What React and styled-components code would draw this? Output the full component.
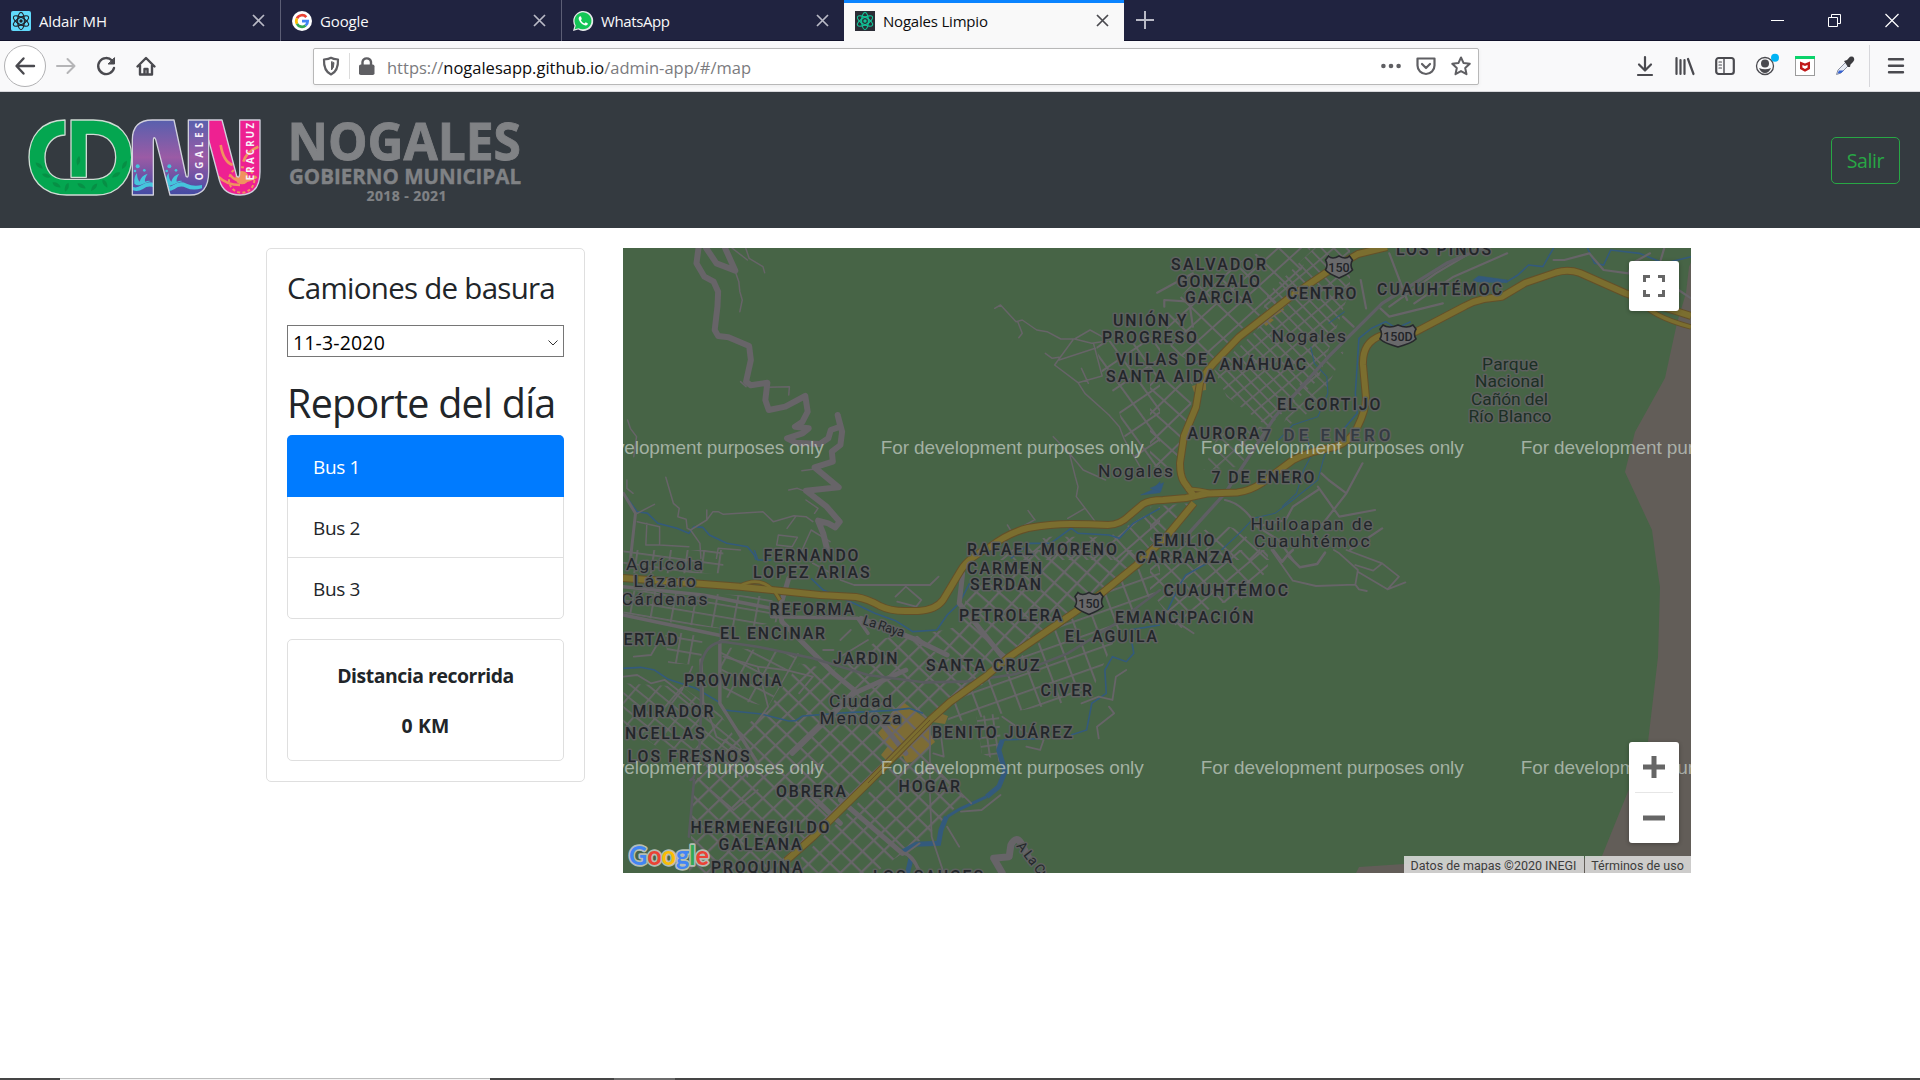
import React from "react";
import styled, { createGlobalStyle } from "styled-components";

const UI = `"Open Sans", "Noto Sans", sans-serif`;

const Global = createGlobalStyle`
  *, *::before, *::after { box-sizing: border-box; }
  body { margin: 0; background: #fff; font-family: ${UI}; color: #212529; overflow: hidden; }
  p, h1, h3, ul { margin: 0; padding: 0; font-weight: 400; }
`;

const Screen = styled.div`
  width: 1920px;
  height: 1080px;
  display: flex;
  flex-direction: column;
`;

/* ---------- browser chrome ---------- */
const TabStrip = styled.div`
  height: 41px;
  display: flex;
  background: #202340;
  border-bottom: 1px solid #11122b;
`;
const Tab = styled.div`
  width: ${(p) => p.$w}px;
  height: 41px;
  display: flex;
  align-items: center;
  padding: 0 15px 0 11px;
  gap: 8px;
  color: ${(p) => (p.$active ? "#0c0c0d" : "#f9f9fa")};
  background: ${(p) => (p.$active ? "#f9f9f9" : "transparent")};
  border-right: ${(p) => (p.$line ? "1px solid #5c5e75" : "0")};
  box-shadow: ${(p) => (p.$active ? "inset 0 3px #0a84ff" : "none")};
`;
const TabTitle = styled.span`
  flex: 1;
  font-size: 15px;
  line-height: 20px;
  letter-spacing: ${(p) => p.$ls}px;
  white-space: nowrap;
`;
const Icon = styled.svg`
  flex: none;
  display: block;
  overflow: visible;
`;
const NewTab = styled.div`
  display: flex;
  align-items: center;
  padding-left: 12px;
  flex: 1;
`;
const WindowButtons = styled.div`
  display: flex;
  align-items: center;
  gap: 44px;
  padding-right: 21px;
`;
const Toolbar = styled.div`
  height: 51px;
  display: flex;
  align-items: center;
  background: #f9f9fa;
  border-bottom: 1px solid #d7d7db;
  color: #4a4a4f;
`;
const NavButtons = styled.div`
  width: 313px;
  display: flex;
  align-items: center;
  gap: 20px;
  padding-left: 4px;
`;
const BackCircle = styled.div`
  width: 42px;
  height: 42px;
  border: 1px solid #b1b1b3;
  border-radius: 50%;
  background: #fff;
  display: grid;
  place-items: center;
  margin-right: -10px;
`;
const UrlBar = styled.div`
  width: 1166px;
  height: 37px;
  display: flex;
  align-items: center;
  background: #fff;
  border: 1px solid #b8b8b8;
  border-radius: 2px;
  box-shadow: 0 1px 4px rgba(0, 0, 0, 0.06);
  padding: 0 7px;
`;
const UrlDivider = styled.span`
  width: 1px;
  height: 26px;
  background: #dcdcdc;
  margin: 0 7px 0 8px;
`;
const Url = styled.span`
  flex: 1;
  padding: 3px 0 0 10px;
  font-size: 16.5px;
  line-height: 24px;
  letter-spacing: 0;
  color: #7b7b7e;
  white-space: nowrap;
  b { font-weight: 400; color: #0c0c0d; }
`;
const UrlActions = styled.div`
  display: flex;
  gap: 15px;
`;
const ToolIcons = styled.div`
  flex: 1;
  display: flex;
  align-items: center;
  justify-content: flex-end;
  gap: 20px;
  padding-right: 16px;
`;
const ToolDivider = styled.span`
  width: 1px;
  height: 42px;
  background: #d7d7db;
  margin: 0 -2px 0 -6px;
`;

/* ---------- page ---------- */
const Navbar = styled.header`
  height: 136px;
  display: flex;
  align-items: center;
  justify-content: space-between;
  padding-right: 20px;
  background: #343a40;
`;
const ExitButton = styled.button`
  width: 69px;
  height: 47px;
  padding: 1px 0 0 0;
  margin-top: 1px;
  border: 1px solid #28a745;
  border-radius: 5px;
  background: transparent;
  color: #28a745;
  font: 400 19.5px/30px ${UI};
  letter-spacing: -0.4px;
`;
const Content = styled.main`
  flex: 1;
  display: flex;
  align-items: flex-start;
  gap: 38px;
  padding: 20px 0 0 266px;
`;
const Card = styled.section`
  width: 319px;
  height: 534px;
  padding: 20px;
  border: 1px solid #dfdfdf;
  border-radius: 5px;
`;
const Subtitle = styled.h3`
  padding-top: 1px;
  font-size: 29.5px;
  line-height: 35px;
  letter-spacing: -0.73px;
  white-space: nowrap;
`;
const Select = styled.div`
  height: 32px;
  margin-top: 20px;
  padding: 3px 5px 0 5px;
  display: flex;
  align-items: center;
  justify-content: space-between;
  border: 1px solid #767676;
  color: #000;
  font-size: 19.5px;
  line-height: 28px;
  letter-spacing: 0.15px;
`;
const Title = styled.h1`
  margin-top: 22px;
  font-size: 39.5px;
  line-height: 48px;
  letter-spacing: -0.75px;
  white-space: nowrap;
`;
const List = styled.ul`
  margin-top: 8px;
  list-style: none;
  border: 1px solid #dfdfdf;
  border-radius: 5px;
`;
const Item = styled.li`
  height: ${(p) => (p.$active ? 62 : p.$line ? 61 : 60)}px;
  margin: ${(p) => (p.$active ? "-1px -1px 0" : "0")};
  padding: ${(p) => (p.$active ? "2px 26px 0" : "2px 25px 0")};
  display: flex;
  align-items: center;
  font-size: 19px;
  letter-spacing: -0.35px;
  color: ${(p) => (p.$active ? "#fff" : "#212529")};
  background: ${(p) => (p.$active ? "#007bff" : "transparent")};
  border-radius: ${(p) => (p.$active ? "5px 5px 0 0" : "0")};
  border-bottom: ${(p) => (p.$line ? "1px solid #dfdfdf" : "0")};
`;
const Distance = styled.div`
  height: 122px;
  margin-top: 20px;
  border: 1px solid #dfdfdf;
  border-radius: 5px;
  display: flex;
  flex-direction: column;
  align-items: center;
  justify-content: center;
  gap: 20px;
  padding-top: 2px;
  font-size: 19.4px;
  font-weight: 700;
  line-height: 30px;
  letter-spacing: -0.45px;
`;
const Amount = styled.p`
  letter-spacing: 0.2px;
`;
const MapFrame = styled.section`
  position: relative;
  width: 1068px;
  height: 625px;
  overflow: hidden;
  background: #476446;
`;
const MapControl = styled.div`
  position: absolute;
  right: 12px;
  width: 50px;
  display: flex;
  flex-direction: column;
  align-items: center;
  background: #fff;
  border-radius: 3px;
  box-shadow: 0 1px 4px rgba(0, 0, 0, 0.3);
`;
const FullscreenControl = styled(MapControl)`
  top: 13px;
  height: 50px;
  justify-content: center;
`;
const ZoomControl = styled(MapControl)`
  top: 494px;
  height: 101px;
  justify-content: center;
  gap: 14px;
`;
const ZoomLine = styled.span`
  width: 38px;
  height: 1px;
  background: #e6e6e6;
`;
const Attribution = styled.div`
  position: absolute;
  right: 0;
  bottom: 0;
  display: flex;
  gap: 1px;
  height: 17px;
  font: 400 12.5px/19px Roboto, sans-serif;
  color: #3c3c3c;
`;
const Notice = styled.span`
  width: ${(p) => p.$w}px;
  padding-right: 1px;
  text-align: center;
  white-space: nowrap;
  background: rgba(222, 222, 222, 0.86);
`;
const Taskbar = styled.footer`
  height: 2px;
  display: flex;
  background: #454545;
`;
const TaskWindow = styled.span`
  width: 430px;
  margin-left: 60px;
  background: #f4f4f4;
  border-top: 1px solid #bdbdbd;
`;
const TaskHover = styled.span`
  width: 61px;
  margin-left: 124px;
  background: #6b6b6b;
`;

/* ---------- icons ---------- */
const Close = ({ c = "#b9bac6" }) => (
  <Icon width="13" height="13" viewBox="0 0 13 13">
    <path d="M1 1L12 12M12 1L1 12" stroke={c} strokeWidth="1.7" fill="none" />
  </Icon>
);
const AtomIcon = ({ bg, fg, r }) => (
  <Icon width="20" height="20" viewBox="0 0 20 20">
    <rect width="20" height="20" rx={r} fill={bg} />
    <g fill="none" stroke={fg} strokeWidth="1.1">
      {[30, 90, 150].map((a) => (
        <ellipse key={a} cx="10" cy="10" rx="8.6" ry="3.4" transform={`rotate(${a} 10 10)`} />
      ))}
      <circle cx="10" cy="10" r="4.4" strokeWidth=".7" />
    </g>
    <circle cx="10" cy="10" r="1.7" fill={fg} />
  </Icon>
);
const GoogleIcon = () => (
  <Icon width="20" height="20" viewBox="0 0 20 20">
    <circle cx="10" cy="10" r="10" fill="#fff" />
    <g fill="none" strokeWidth="2.7">
      <path d="M14.3 6.1A5.7 5.7 0 0 0 5 7.3" stroke="#ea4335" />
      <path d="M5 7.3A5.7 5.7 0 0 0 5 12.8" stroke="#fbbc05" />
      <path d="M5 12.8A5.7 5.7 0 0 0 13.6 14.5" stroke="#34a853" />
      <path d="M13.6 14.5A5.4 5.4 0 0 0 15.7 10.1H10" stroke="#4285f4" />
    </g>
  </Icon>
);
const WhatsAppIcon = () => (
  <Icon width="20" height="20" viewBox="0 0 20 20">
    <path d="M0 20L1.5 14.8A10 10 0 1 1 5.2 18.6Z" fill="#e6e9ea" />
    <path d="M1.7 18.3L2.8 14.4A8.5 8.5 0 1 1 5.7 17.2Z" fill="#14c656" />
    <path d="M7 5.3C5.4 6 5.2 8 6.6 10.3C8.5 13.2 11.6 15 13.6 14.2C15 13.6 14.9 12.5 14.6 12.2L12.6 11.2L11.5 12.4C9.9 11.9 8.6 10.6 7.9 9.2L8.8 8L8 5.5Z" fill="#fff" />
  </Icon>
);

const Stroke = ({ s = 20, children, w = 2.4, c = "currentColor" }) => (
  <Icon width={s} height={s} viewBox="0 0 20 20" fill="none" stroke={c} strokeWidth={w} strokeLinecap="round" strokeLinejoin="round">
    {children}
  </Icon>
);

const Chrome = () => (
  <>
    <TabStrip>
      <Tab $w={281} $line>
        <AtomIcon bg="#61dafb" fg="#20232a" r="2" />
        <TabTitle $ls={-0.15}>Aldair MH</TabTitle>
        <Close />
      </Tab>
      <Tab $w={281} $line>
        <GoogleIcon />
        <TabTitle $ls={-0.15}>Google</TabTitle>
        <Close />
      </Tab>
      <Tab $w={282}>
        <WhatsAppIcon />
        <TabTitle $ls={-0.4}>WhatsApp</TabTitle>
        <Close />
      </Tab>
      <Tab $w={280} $active>
        <AtomIcon bg="#2b2d36" fg="#12c296" r="0" />
        <TabTitle $ls={-0.2}>Nogales Limpio</TabTitle>
        <Close c="#4a4a4f" />
      </Tab>
      <NewTab>
        <Icon width="18" height="18" viewBox="0 0 18 18">
          <path d="M9 0V18M0 9H18" stroke="#b9bac6" strokeWidth="2" />
        </Icon>
      </NewTab>
      <WindowButtons>
        <Icon width="13" height="13" viewBox="0 0 13 13"><path d="M0 6.5H13" stroke="#fff" /></Icon>
        <Icon width="13" height="13" viewBox="0 0 13 13"><path d="M3.5 3.5V.5H12.5V9.5H9.5M.5 3.5H9.5V12.5H.5Z" stroke="#fff" fill="none" /></Icon>
        <Icon width="14" height="13" viewBox="0 0 14 13"><path d="M.5 0L13.5 13M13.5 0L.5 13" stroke="#fff" fill="none" strokeWidth="1.2" /></Icon>
      </WindowButtons>
    </TabStrip>
    <Toolbar>
      <NavButtons>
        <BackCircle><Stroke><path d="M19 10H2M8.5 2.5L1.5 10L8.5 17.5" /></Stroke></BackCircle>
        <Stroke c="#b5b5b7" w={2}><path d="M1 10H18M11.5 3L18.5 10L11.5 17" /></Stroke>
        <Stroke><path d="M16 4.5A8 8 0 1 0 18 12" /><path d="M18.5 2V8H12.5Z" fill="currentColor" strokeWidth="1" /></Stroke>
        <Stroke><path d="M1.5 10.5L10 2L18.5 10.5M4 9.5V18.5H16V9.5M8.5 18V13H11.5V18" /></Stroke>
      </NavButtons>
      <UrlBar>
        <Stroke w={2.2} c="#5f5f63"><path d="M3 3.5Q8 3 10 1.8Q12 3 17 3.5Q17.5 15 10 18.5Q2.5 15 3 3.5Z" /><path d="M10.5 6V14Q13 12 13 7Z" fill="#5f5f63" strokeWidth="1" /></Stroke>
        <UrlDivider />
        <Icon width="20" height="20" viewBox="0 0 20 20"><rect x="2" y="8.5" width="15.5" height="10.5" rx="1.8" fill="#5f5f63" /><path d="M5.5 9V6A4.3 4.3 0 0 1 14 6V9" stroke="#5f5f63" strokeWidth="2.4" fill="none" /></Icon>
        <Url>https://<b>nogalesapp.github.io</b>/admin-app/#/map</Url>
        <UrlActions>
          <Icon width="20" height="20" viewBox="0 0 20 20" fill="#5f5f63"><circle cx="2.4" cy="10" r="2.3" /><circle cx="10" cy="10" r="2.3" /><circle cx="17.6" cy="10" r="2.3" /></Icon>
          <Stroke w={2.2} c="#5f5f63"><path d="M1.5 2.5H18.5V9.5A8.5 8.5 0 0 1 1.5 9.5ZM6 8L10 12L14 8" /></Stroke>
          <Stroke w={2} c="#5f5f63"><path d="M10 1.5L12.6 7.1L18.8 7.8L14.2 12L15.5 18.2L10 15.1L4.5 18.2L5.8 12L1.2 7.8L7.4 7.1Z" /></Stroke>
        </UrlActions>
      </UrlBar>
      <ToolIcons>
        <Stroke w={2.2}><path d="M10 1V14M4 8.5L10 14.5L16 8.5M3 19H17" /></Stroke>
        <Stroke w={2.2}><path d="M1.5 2V18M5.5 4V18M9.5 4V18M13 3L18.5 18" /></Stroke>
        <Stroke w={2.2}><rect x="1.2" y="2" width="17.6" height="16" rx="2.5" /><path d="M9 2V18" strokeWidth="1.4" /><path d="M4 6H6.5M4 9H6.5M4 12H6.5" strokeWidth="1.2" /></Stroke>
        <Icon width="20" height="20" viewBox="0 0 20 20">
          <circle cx="10" cy="10" r="8.5" fill="none" stroke="#4a4a4f" strokeWidth="1.3" />
          <circle cx="10" cy="7.5" r="4" fill="#4a4a4f" />
          <path d="M4 12Q10 14.5 16 12Q14 17 10 17Q6 17 4 12Z" fill="#4a4a4f" />
          <circle cx="20" cy="1.7" r="4" fill="#00b3f4" />
        </Icon>
        <Icon width="20" height="20" viewBox="0 0 20 20">
          <rect x=".5" y=".5" width="19" height="19" fill="#fff" stroke="#9b9b9b" />
          <rect width="20" height="3" fill="#0bd36b" />
          <path d="M5 5.5L10 7.5L15 5.5V13L10 15.8L5 13ZM7.4 9V11.6L10 13L12.6 11.6V9L10 10Z" fill="#c01818" fillRule="evenodd" />
        </Icon>
        <Icon width="20" height="20" viewBox="0 0 20 20">
          <path d="M1.5 18.5L3 14L11 6L14 9L6 17Z" fill="#e8ecf5" stroke="#8b90a0" />
          <path d="M2.5 17.5L4 14.5H9L6 17Z" fill="#3563d6" />
          <path d="M9 5L12 4L15 .8Q18 0 19 2Q20 4 18 6L15.5 8.5L15 11L13 11Z" fill="#3c3c40" />
        </Icon>
        <ToolDivider />
        <Icon width="16" height="20" viewBox="0 0 16 20"><path d="M1 3.2H15M1 9.7H15M1 16.2H15" stroke="#4a4a4f" strokeWidth="2.4" strokeLinecap="round" /></Icon>
      </ToolIcons>
    </Toolbar>
  </>
);

/* ---------- municipal logo ---------- */
const Leaf = ({ x, y, r }) => (
  <path d="M0 -15Q11 -2 0 14Q-11 -2 0 -15Z" transform={`translate(${x} ${y}) rotate(${r})`} fill="#078f45" />
);
const Splash = ({ x }) => (
  <g transform={`translate(${x} 0)`} fill="#45c5dc">
    <path d="M0 246Q12 250 26 240Q46 226 66 236Q86 246 112 240V250Q84 258 64 248Q46 240 30 252Q14 262 0 256Z" />
    <path d="M4 236Q2 214 12 204Q12 222 20 230Q24 212 44 206Q34 220 36 230Q46 226 54 228Q40 232 28 238Q14 244 4 236Z" />
    <circle cx="14" cy="184" r="6" /><circle cx="6" cy="198" r="4" /><circle cx="34" cy="196" r="4" />
  </g>
);
const Brand = () => (
  <Icon width="530" height="136" viewBox="0 92 530 136">
    <defs>
      <linearGradient id="violet" x1="0" x2="0" y1="0" y2="1">
        <stop offset="0" stopColor="#5560ae" />
        <stop offset=".5" stopColor="#9b5ba5" />
        <stop offset="1" stopColor="#3f4aa3" />
      </linearGradient>
      <clipPath id="n1"><path d="M367 270V105Q367 45 427 45H492L528 213Q535 222 535 205V45H596V200Q596 270 540 270H480L437 103Q430 90 430 110V270Z" /></clipPath>
      <clipPath id="n2"><path d="M596 45H636L680 213Q689 222 689 205V45H750V200Q750 270 690 270Q640 270 628 225L596 105Z" /></clipPath>
    </defs>
    <g transform="translate(10 105) scale(.33333)" strokeLinejoin="round">
      <path d="M165 45C95 45 57 95 57 157C57 220 95 270 170 270H260C330 270 365 215 365 157C365 95 330 45 250 45H183V217H229V88H250C295 88 317 120 317 157C317 195 295 223 250 223H165C125 223 105 195 105 157C105 120 130 90 165 90Z" fill="#04a650" stroke="#cfdcd4" strokeWidth="4" />
      <Leaf x={88} y={182} r={-50} /><Leaf x={110} y={212} r={-70} /><Leaf x={140} y={240} r={-60} />
      <Leaf x={170} y={247} r={20} /><Leaf x={215} y={243} r={-60} /><Leaf x={252} y={247} r={40} />
      <Leaf x={285} y={236} r={-30} /><Leaf x={318} y={210} r={60} /><Leaf x={343} y={180} r={30} />
      <Leaf x={205} y={168} r={10} />
      <g clipPath="url(#n1)">
        <rect x="360" y="40" width="240" height="235" fill="url(#violet)" />
        <Splash x={369} />
        <Splash x={464} />
      </g>
      <g clipPath="url(#n2)">
        <rect x="590" y="40" width="170" height="235" fill="#ee2191" />
        <g fill="none" stroke="#f0925f" strokeWidth="8">
          <path d="M632 120Q640 170 668 180M660 210Q690 245 740 215M625 215Q650 240 690 240M745 125Q710 140 700 170" />
          <circle cx="695" cy="225" r="38" strokeDasharray="9 7" strokeWidth="6" />
        </g>
        <circle cx="696" cy="218" r="20" fill="#f0925f" />
      </g>
      <g fill="none" stroke="#d0d0dc" strokeWidth="4">
        <path d="M367 270V105Q367 45 427 45H492L528 213Q535 222 535 205V45H596V200Q596 270 540 270H480L437 103Q430 90 430 110V270Z" />
        <path d="M596 45H636L680 213Q689 222 689 205V45H750V200Q750 270 690 270Q640 270 628 225L596 105" />
      </g>
      <g fill="#f7f0fa" fontFamily="Open Sans, sans-serif" fontWeight="700" fontSize="29">
        <text transform="translate(579 226) rotate(-90)" textLength="172">OGALES</text>
        <text transform="translate(731 226) rotate(-90)" textLength="172">ERACRUZ</text>
      </g>
    </g>
    <g fill="#808285" stroke="#808285" fontFamily="Open Sans, sans-serif" fontWeight="700">
      <text x="287.5" y="159.7" fontSize="52" strokeWidth=".9" textLength="233.5" lengthAdjust="spacingAndGlyphs">NOGALES</text>
      <text x="289" y="184" fontSize="21.6" strokeWidth=".4" textLength="232" lengthAdjust="spacingAndGlyphs">GOBIERNO MUNICIPAL</text>
      <text x="366.5" y="200.7" fontSize="14" strokeWidth=".2" textLength="80">2018 - 2021</text>
    </g>
  </Icon>
);

/* ---------- map ---------- */
const LABELS = [
  ["SALVADOR", 1171, 1266, 270.3], ["GONZALO", 1177, 1260, 286.5], ["GARCIA", 1185, 1252, 302.7],
  ["CENTRO", 1287, 1356.5, 299.3], ["LOS PINOS", 1396, 1491, 254.7], ["CUAUHTÉMOC", 1377, 1502, 294.7],
  ["UNIÓN Y", 1113, 1186.5, 326.3], ["PROGRESO", 1102, 1197, 342.7], ["VILLAS DE", 1116, 1207, 365.3],
  ["SANTA AIDA", 1106, 1215.5, 381.7], ["ANÁHUAC", 1219.5, 1306, 369.7], ["EL CORTIJO", 1277, 1380.5, 409.7],
  ["AURORA", 1187.5, 1259.5, 439.3], ["7 DE ENERO", 1211.5, 1314.5, 483.3], ["EMILIO", 1153.5, 1214.5, 546.3],
  ["CARRANZA", 1135.5, 1232, 562.7], ["RAFAEL MORENO", 967, 1117, 554.5], ["CARMEN", 967, 1042, 573.7],
  ["SERDAN", 970, 1041, 590.3], ["PETROLERA", 959, 1062, 621.3], ["CUAUHTÉMOC", 1163.5, 1288, 595.7],
  ["EMANCIPACIÓN", 1115, 1253.5, 622.7], ["EL AGUILA", 1065, 1157, 642.3], ["SANTA CRUZ", 926, 1039.5, 670.7],
  ["CIVER", 1040.5, 1092, 695.7], ["BENITO JUÁREZ", 932, 1072.5, 738.3], ["HOGAR", 898.5, 960, 792],
  ["JARDIN", 833, 897.5, 664], ["FERNANDO", 763.5, 858.5, 561], ["LOPEZ ARIAS", 753, 869.5, 577.5],
  ["REFORMA", 769.5, 854, 615.3], ["EL ENCINAR", 720, 825, 639.3], ["ERTAD", 623.5, 677.5, 645.3],
  ["PROVINCIA", 684, 781.5, 686], ["MIRADOR", 632.5, 713.5, 717.3], ["NCELLAS", 625, 704.5, 739],
  ["LOS FRESNOS", 627.5, 749.5, 762], ["OBRERA", 776, 846, 797], ["HERMENEGILDO", 690.5, 829.5, 833.3],
  ["GALEANA", 718.5, 801.5, 849.7], ["PROQUINA", 711, 802.5, 873.2], ["LOS SAUCES", 873, 983, 882],
];
const TOWNS = [
  ["Nogales", 1271.5, 1346, 342.3], ["Nogales", 1098, 1173, 477.3], ["Huiloapan de", 1250.5, 1372.5, 529.7],
  ["Cuauhtémoc", 1254, 1369.5, 547.3], ["Ciudad", 829, 892, 706.7], ["Mendoza", 819.5, 901.5, 724],
  ["Agrícola", 626, 703, 569.5], ["Lázaro", 633.5, 696, 587], ["Cárdenas", 621.5, 707.5, 604.7],
];
const PARK = [
  ["Parque", 1482, 1538, 370], ["Nacional", 1475, 1544, 387.3], ["Cañón del", 1471, 1548, 404.7], ["Río Blanco", 1468.5, 1551.5, 422],
];
const Labels = ({ items }) =>
  items.map(([t, a, b, y]) => (
    <text key={t + y} x={a} y={y} textLength={b - a}>{t}</text>
  ));

const Streets = ({ id, a, w, h, lw = 6.5, pts }) => (
  <>
    <pattern id={id} width={w} height={h} patternUnits="userSpaceOnUse" patternTransform={`rotate(${a})`}>
      <path d={`M0 0V${h}M0 0H${w}`} stroke="#686569" strokeWidth={lw * 2} />
    </pattern>
    <polygon points={pts} fill={`url(#${id})`} />
  </>
);

const NORTH_WEST = "translate(620 240) scale(.34438 .33333)";
const NORTH_EAST = "translate(1150 240) scale(.35714 .33333)";
const SOUTH_WEST = "translate(620 550) scale(.34438 .33333)";
const SOUTH_EAST = "translate(1150 550) scale(.35714 .33333)";

const TOLL = "M623 578L740 586.7L820 595L856 597Q868 599 880 606Q890 611 905 611H918Q936 610 943 600L961 570Q968 558 990 547Q1008 533 1028 528Q1050 524 1071 524Q1090 524 1108 525Q1120 525 1130 515L1143 504Q1150 500 1163 500L1186 498L1207 493.5L1237 492.5Q1250 491 1262 483L1293 460Q1310 451 1335 447Q1350 442 1357 428Q1366 410 1366 398L1363 365Q1362 343 1380 336L1416 331.7L1465 306Q1474 301 1484 299L1502 296.7L1525 283L1556 272.5Q1568 269 1580 273L1625 293L1660 306L1691 316";
const FEDERAL = "M786 861L813 837L868 783L930 720L950 702L985 677L1009 657L1078 610L1102 593L1136.5 565L1166 537L1194 503M1194 496L1184 482Q1180 476 1180 463L1184 436L1196 407L1200 383Q1204 374 1214 363L1239 337L1293 295L1327 272L1358 254L1387 247";

const Shield = ({ x, y, w, t }) => (
  <g transform={`translate(${x} ${y})`}>
    <path d={`M${-w / 2 + 3} -10Q${-w / 4} -6 0 -10Q${w / 4} -6 ${w / 2 - 3} -10L${w / 2} -6Q${w / 2 - 3} -1 ${w / 2} 4Q${w / 2 - 4} 8 0 12Q${-w / 2 + 4} 8 ${-w / 2} 4Q${-w / 2 + 3} -1 ${-w / 2} -6Z`} fill="#69696b" stroke="#26282c" strokeWidth="1.6" />
    <text x="0" y="5.5" textAnchor="middle" fontFamily="Roboto, sans-serif" fontSize="12.5" fontWeight="500" fill="#222428">{t}</text>
  </g>
);

const MapDrawing = () => (
  <Icon width="1068" height="625" viewBox="623 248 1068 625">
    <path d="M1691 262L1689 267L1686 293L1677 323L1665 378L1635 432L1625 472L1652 530L1656 560L1660 587L1658 657L1648 742L1602 856L1600 858L1404 864L1359 867L1356 873H1691Z" fill="#625d58" />

    <path d="M878 733L886 724L892 712L903 702L926 719L934 711L948 716L945 724L932 722L930 733L935 742L912 762L906 763L903 756L888 762L881 755L888 746Z" fill="#7d6c35" />
    <path d="M1270 312L1282 305L1284 310L1272 318ZM1192 386L1206 382L1206 390L1194 392ZM1262 322L1268 316L1274 320L1266 326Z" fill="#7d6c35" />

    <g transform={NORTH_EAST}>
      <Streets id="ne1" a={-42} w={26} h={36} lw={5} pts="330,160 460,24 560,24 560,150 470,420 330,560 215,470 180,390 300,270" />
      <Streets id="ne2" a={-44} w={60} h={44} lw={5.5} pts="110,140 330,24 450,24 400,150 240,280 150,390 60,330 40,230" />
      <Streets id="ne3" a={-46} w={46} h={60} lw={5.5} pts="0,400 120,420 110,580 70,680 0,680" />
      <Streets id="ne4" a={-44} w={48} h={44} lw={6} pts="0,800 110,790 80,830 0,920" />
      <Streets id="ne5" a={-46} w={58} h={54} lw={5.5} pts="190,850 250,870 340,960 0,960 60,920" />
      <Streets id="ne6" a={-44} w={34} h={56} lw={4.5} pts="200,560 330,560 250,680 150,690" />
      <Streets id="ne7" a={-44} w={50} h={54} lw={4.5} pts="420,430 500,360 545,330 480,480 420,540 370,560" />
    </g>
    <g transform={NORTH_WEST}>
      <Streets id="nw1" a={-35} w={52} h={66} lw={5.5} pts="1380,305 1568,290 1568,680 1510,680 1465,590 1440,470 1400,400" />
      <Streets id="nw2" a={-42} w={52} h={44} lw={5.5} pts="1110,940 1240,890 1420,890 1568,800 1568,960 1090,960" />
    </g>
    <g transform={SOUTH_WEST}>
      <Streets id="sw1" a={45} w={43} h={46} pts="215,700 300,570 430,480 520,340 620,360 750,270 830,250 900,300 1080,385 930,490 720,700 560,860 450,969 200,969" />
      <Streets id="sw2" a={45} w={42} h={46} pts="900,520 905,640 1000,740 950,800 900,850 820,910 740,969 480,969 720,730" />
      <Streets id="sw3" a={42} w={50} h={43} pts="980,230 1010,130 1180,0 1540,0 1480,60 1110,330 1060,370 850,260" />
      <Streets id="sw4" a={-20} w={58} h={50} lw={5.5} pts="1150,330 1500,60 1568,30 1568,110 1440,260 1380,400 1280,460 950,520 960,470" />
      <Streets id="sw5" a={8} w={48} h={34} lw={5} pts="10,0 300,0 300,70 10,70" />
      <Streets id="sw6" a={10} w={60} h={36} lw={5} pts="10,120 440,140 460,215 330,240 160,220 10,190" />
      <Streets id="sw7" a={40} w={50} h={32} lw={5} pts="10,400 180,410 290,490 380,640 190,650 10,520" />
      <Streets id="sw8" a={10} w={36} h={38} lw={5} pts="130,240 240,260 235,345 140,340" />
      <Streets id="sw9" a={-8} w={25} h={26} lw={5} pts="1035,500 1100,490 1110,640 1050,610" />
      <Streets id="sw10" a={28} w={60} h={44} lw={5} pts="290,290 520,310 500,350 430,470 300,440" />
    </g>
    <g transform={SOUTH_EAST}>
      <Streets id="se1" a={-42} w={46} h={42} lw={5.5} pts="0,30 200,0 330,0 330,60 250,155 190,160 80,240 0,120" />
    </g>

    <g fill="none" stroke="#335a7c" strokeWidth="1.6">
      <g transform={NORTH_WEST}>
        <path vectorEffect="non-scaling-stroke" d="M10 760L50 815L80 820L110 850L165 865L200 880L215 860L240 862L260 885L310 910L370 920L390 945L395 960M1135 955L1190 910L1250 910L1310 865L1330 880L1420 885L1450 895L1490 850L1568 805" />
        <path fill="#335a7c" d="M1512 765L1545 750L1568 725V758Z" />
      </g>
      <g transform={NORTH_EAST}>
        <path vectorEffect="non-scaling-stroke" d="M730 245L690 265L660 245L620 265L585 295L575 460L580 520L540 570M1130 24L1100 80L1060 75L1030 105L1000 125M1225 24L1245 70L1270 75L1290 30L1370 40L1440 70L1515 50" />
        <path vectorEffect="non-scaling-stroke" strokeWidth="1.1" d="M545 215L500 250M450 320L460 370L495 410L498 460L470 530L400 555L360 600M490 640L470 720L400 780L350 820L290 835L250 880L200 930M440 580L450 650L430 690L410 760L370 800" />
        <path fill="#335a7c" d="M905 120L920 108L1000 120L1000 128L915 126ZM0 745L38 728L30 755Z" />
      </g>
      <g transform={SOUTH_WEST}>
        <path vectorEffect="non-scaling-stroke" d="M10 355L60 352L100 360L140 388L220 415L285 455L300 480L410 492L490 513L510 512L530 498L660 488L780 482L840 475L880 490M390 0L400 30L440 30M555 85L590 120L690 165L740 190L800 212L850 245L920 240L950 195L985 160L1015 100M1568 225L1480 240L1492 310L1470 335L1430 320L1408 360L1412 430L1370 460L1355 540L1310 555M1230 565L1110 570" />
        <path vectorEffect="non-scaling-stroke" strokeWidth="5" d="M1110 570L1100 600L1118 665L1100 710L1065 740M948 800L932 840L925 880L860 883L822 905M845 925L835 969" />
        <path vectorEffect="non-scaling-stroke" strokeWidth="3" d="M1065 740L1040 752L985 778L950 800" />
      </g>
      <g transform={SOUTH_EAST}>
        <path vectorEffect="non-scaling-stroke" d="M160 40L100 75L80 110L50 180" />
      </g>
    </g>

    <g fill="none" stroke="#676468" strokeLinejoin="round" strokeLinecap="round">
      <g transform={NORTH_WEST} strokeWidth="1.5">
        <path vectorEffect="non-scaling-stroke" d="M325 24L370 60M365 24L375 55L415 80L420 98M335 95L345 125L348 155L355 180L348 215M350 425L366 440M430 442L492 440L490 465M22 540L30 565L48 590L40 650M133 712L155 790L172 805L168 830L192 838L195 865L205 870L252 840L270 815L285 815L300 823L415 815L445 845L505 827L540 830L560 845M252 810V838M528 692L560 688M490 750L515 745L540 755M20 720V745L38 760M50 820L100 793M50 845L115 860L115 915L75 915L78 850M115 915L200 920M205 870L232 910L235 955M460 885L515 892L500 920L455 915ZM485 865L510 830M280 955L285 925L350 930M520 950L555 870L610 905M540 780L575 805L565 820M1088 205L1105 195L1150 245L1168 240L1210 270L1240 275L1280 297L1320 297L1365 270L1400 290M1320 297L1370 310L1400 305M1155 245L1168 280L1158 293M1235 340L1255 355L1275 352M1262 375L1315 300M1262 375L1330 428L1350 460L1420 525L1450 560L1465 600L1510 680M1330 428L1400 408L1375 310M1275 360L1380 325M1340 385L1360 430M1258 590L1305 640L1345 690L1410 720M1305 640L1322 710L1330 740L1325 770L1380 845M1185 812L1205 840M1125 855L1135 872M1085 905L1200 842M1300 835L1350 805" />
        <path vectorEffect="non-scaling-stroke" strokeWidth="3" d="M10 760L45 820L30 960" />
        <path vectorEffect="non-scaling-stroke" strokeWidth="6" d="M228 24L222 70L245 110L272 125L285 155L283 200L275 270L285 288L315 292L375 318L380 360L366 425L380 436L428 428L422 480L432 510L480 500L538 468L545 515L530 545L508 560L548 565L530 580L485 595L510 608L580 612L605 595L612 570L640 560L632 525L645 575L640 615L615 635L618 665L565 682L635 742L540 752L600 800L638 845L625 862L605 850L575 842L590 880L602 930M250 24L280 70L335 92L305 24" />
      </g>
      <g transform={NORTH_EAST} strokeWidth="1.8">
        <path vectorEffect="non-scaling-stroke" strokeWidth="2.2" d="M20 158L120 100M40 200V180L110 185L120 260M670 40L720 180M920 24L800 100L670 200M1000 40L850 110L740 190M645 205L670 230L820 190M590 120L605 205M540 230L570 260M595 670L550 760L500 720L480 700M550 760L470 870M470 740L530 830L630 810M470 750L400 800L380 840L300 860M650 865L560 930M1130 60L1160 60L1230 40L1270 90L1340 100L1350 70L1400 40M1440 24L1430 60M1480 150L1515 175M400 960L360 900L300 860M210 780Q260 790 300 860" />
        <path vectorEffect="non-scaling-stroke" strokeWidth="3.4" stroke="#5f5f64" d="M100 890L210 760L350 530L500 350L650 190L830 70L930 24" />
      </g>
      <g transform={SOUTH_WEST} strokeWidth="1.8">
        <path vectorEffect="non-scaling-stroke" d="M40 320L90 315L110 280M10 380L50 375L90 400L130 390L180 430L260 500L280 560L350 600L370 680M210 350L180 420L150 460M300 320L400 350L480 360L560 380L520 430M400 350L430 470L380 540M640 90L680 105L900 105L925 80M560 40L640 85M800 140L830 110L875 150L860 170L805 155M1470 360L1440 380L1430 450L1390 440L1340 460M1420 470L1435 490L1385 530L1390 565M1110 500L1180 550L1230 570L1220 600L1180 590M900 520V730L905 860L940 969M910 610L940 620L930 540M870 880L830 910L880 969M900 640L1020 760M950 830L985 890M990 785L1050 780L1105 735M640 270L670 240M640 320L720 270M590 300L620 300M240 700L330 780L400 720" />
        <path vectorEffect="non-scaling-stroke" strokeWidth="5" d="M490 85L465 170L470 215L620 370L680 420M640 750L820 910M560 740L640 820M700 205L850 265L950 315M995 70L985 160L1040 230L1110 320M760 520L830 610M830 360L680 430L500 610" />
        <path vectorEffect="non-scaling-stroke" strokeWidth="3.5" d="M10 195L240 245L330 265M440 200L690 205L720 250M290 275V460L400 640M235 330L240 460M10 110L240 135L440 175M820 910Q850 910 870 969" />
        <path vectorEffect="non-scaling-stroke" strokeWidth="2.6" stroke="#595b5f" d="M215 690L200 860M205 690Q235 680 235 440V350Q245 280 300 275L400 290L560 325L720 375L880 397L1000 395L1150 372L1300 310L1440 220L1568 120" />
        <path vectorEffect="non-scaling-stroke" strokeWidth="7" d="M1165 880Q1150 855 1135 885L1130 920L1085 925L1110 969M1165 880L1190 930" />
      </g>
      <g transform={SOUTH_EAST} strokeWidth="1.8">
        <path vectorEffect="non-scaling-stroke" d="M340 0L400 92L465 108L575 104L585 118L607 123M575 104L582 60L530 10L515 0M575 45L625 62L650 40L697 80L665 118L582 65M550 0L650 40M665 118L715 97M80 220L122 250" />
        <path vectorEffect="non-scaling-stroke" strokeWidth="2.6" d="M385 15L420 52L468 42L490 8M385 15L370 35L345 0M385 15L400 0" />
      </g>
    </g>

    <g fill="none" strokeLinejoin="round">
      <g stroke="#645029" strokeWidth="8"><path d={TOLL} /><path d={FEDERAL} /><path d="M1640 300Q1650 316 1691 327" strokeWidth="5.4" /><path d="M740 586Q760 575 775 592L780 600" strokeWidth="4.4" /><path d="M1186 489Q1200 489 1212 493" strokeWidth="4.4" /></g>
      <g stroke="#7b6e2f" strokeWidth="6"><path d={TOLL} /><path d={FEDERAL} /><path d="M1640 300Q1650 316 1691 327" strokeWidth="3.6" /><path d="M740 586Q760 575 775 592L780 600" strokeWidth="2.8" /><path d="M1186 489Q1200 489 1212 493" strokeWidth="2.8" /></g>
      <path d="M868 783L930 720" stroke="#645029" strokeWidth="1" />
    </g>

    <Shield x={1339} y={266} w={27} t="150" />
    <Shield x={1398} y={335} w={36} t="150D" />
    <Shield x={1089} y={602.5} w={28} t="150" />

    <g fontFamily="Roboto, sans-serif" fill="#23262a" stroke="#5d605f" strokeWidth="3" strokeLinejoin="round" paintOrder="stroke">
      <g fontSize="15.8" fontWeight="500"><Labels items={LABELS} /></g>
      <text x="1261.5" y="440.7" fontSize="17" fontWeight="500" textLength="129" fill="#343a42">7 DE ENERO</text>
      <g fontSize="17.4"><Labels items={TOWNS} /></g>
      <g fontSize="17.4" fill="#1c2f25"><Labels items={PARK} /></g>
      <text transform="translate(862 624) rotate(18)" fontSize="13.5" textLength="43">La Raya</text>
      <text transform="translate(1016 846) rotate(52)" fontSize="13.5" textLength="44">A La Cu</text>
    </g>

    <g fontFamily="Liberation Sans, Arial, sans-serif" fontSize="19" fill="#c8d0c8" fillOpacity=".72">
      {[453.5, 773.5].map((y) => [560.7, 880.7, 1200.7, 1520.7].map((x) => (
        <text key={x + y} x={x} y={y} textLength="263">For development purposes only</text>
      )))}
    </g>

    <text x="629" y="865" fontFamily="Lato, sans-serif" fontSize="27" fontWeight="700" textLength="80" lengthAdjust="spacingAndGlyphs" stroke="#b4bdb4" strokeWidth="3.4" paintOrder="stroke" strokeLinejoin="round">
      <tspan fill="#4285f4">G</tspan><tspan fill="#ea4335">o</tspan><tspan fill="#fbbc05">o</tspan><tspan fill="#4285f4">g</tspan><tspan fill="#34a853">l</tspan><tspan fill="#ea4335">e</tspan>
    </text>
  </Icon>
);

export default function App() {
  return (
    <Screen>
      <Global />
      <Chrome />
      <Navbar>
        <Brand />
        <ExitButton>Salir</ExitButton>
      </Navbar>
      <Content>
        <Card>
          <Subtitle>Camiones de basura</Subtitle>
          <Select>
            11-3-2020
            <Icon width="10" height="6" viewBox="0 0 10 6"><path d="M.5 .5L5 5L9.5 .5" stroke="#333" fill="none" /></Icon>
          </Select>
          <Title>Reporte del día</Title>
          <List>
            <Item $active>Bus 1</Item>
            <Item $line>Bus 2</Item>
            <Item>Bus 3</Item>
          </List>
          <Distance>
            <p><b>Distancia recorrida</b></p>
            <Amount><b>0 KM</b></Amount>
          </Distance>
        </Card>
        <MapFrame>
          <MapDrawing />
          <FullscreenControl>
            <Icon width="22" height="22" viewBox="0 0 22 22"><path d="M1.5 7V1.5H7M15 1.5H20.5V7M20.5 15V20.5H15M7 20.5H1.5V15" fill="none" stroke="#666" strokeWidth="3" /></Icon>
          </FullscreenControl>
          <ZoomControl>
            <Icon width="22" height="22" viewBox="0 0 22 22"><path d="M11 0V22M0 11H22" stroke="#666" strokeWidth="5" /></Icon>
            <ZoomLine />
            <Icon width="22" height="22" viewBox="0 0 22 22"><path d="M0 11H22" stroke="#666" strokeWidth="5" /></Icon>
          </ZoomControl>
          <Attribution>
            <Notice $w={180}>Datos de mapas ©2020 INEGI</Notice>
            <Notice $w={106}>Términos de uso</Notice>
          </Attribution>
        </MapFrame>
      </Content>
      <Taskbar>
        <TaskWindow />
        <TaskHover />
      </Taskbar>
    </Screen>
  );
}
